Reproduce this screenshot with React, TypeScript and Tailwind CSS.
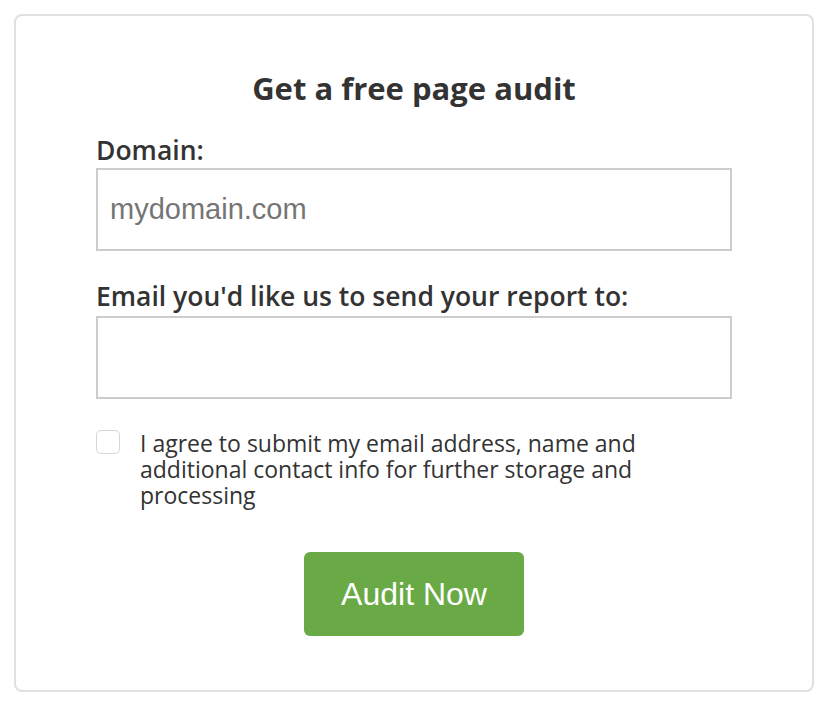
export default function App() {
  return (
    <div className="w-[828px] h-[710px] bg-white p-[14px] font-['Open_Sans',sans-serif] text-[#333]">
      <div className="h-[678px] rounded-[8px] border-2 border-[#e0e0e0] flex flex-col items-center pt-[52px]">
        <h2 className="text-[31px] leading-[40px] font-bold">Get a free page audit</h2>
        <form className="w-[636px] flex flex-col mt-[26px]">
          <label className="text-[26.5px] leading-[32px] font-semibold">Domain:</label>
          <input
            type="text"
            placeholder="mydomain.com"
            className="mt-[2px] h-[83px] border-2 border-[#ccc] px-[12px] text-[29px] font-['Liberation_Sans',sans-serif] placeholder:text-[#757575] outline-none"
          />
          <label className="mt-[29px] text-[26.5px] leading-[32px] font-semibold">
            Email you'd like us to send your report to:
          </label>
          <input
            type="email"
            className="mt-[4px] h-[83px] border-2 border-[#ccc] px-[12px] text-[29px] font-['Liberation_Sans',sans-serif] outline-none"
          />
          <div className="mt-[31px] flex items-start gap-[20px] pr-[8px]">
            <span className="w-[24px] h-[24px] shrink-0 rounded-[5px] border border-[#d6d6d6] bg-white" />
            <p className="text-[23px] leading-[26px]">
              I agree to submit my email address, name and additional contact info for further storage and processing
            </p>
          </div>
          <div className="flex justify-center mt-[44px]">
            <button
              type="button"
              className="w-[220px] h-[84px] rounded-[6px] bg-[#69aa46] text-white text-[32px] font-['Liberation_Sans',sans-serif]"
            >
              Audit Now
            </button>
          </div>
        </form>
      </div>
    </div>
  );
}
